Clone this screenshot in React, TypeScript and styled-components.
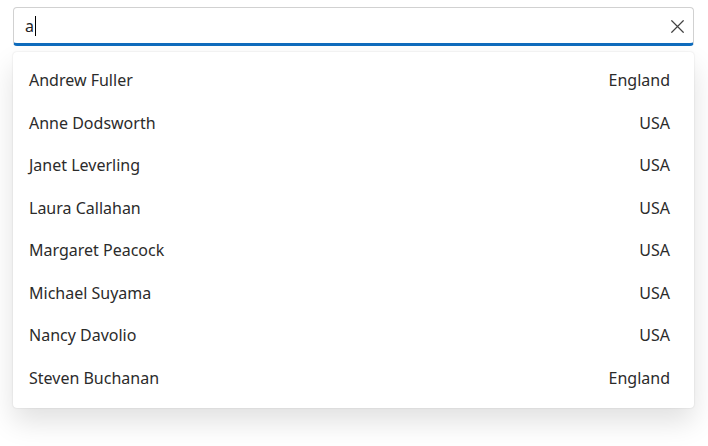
import React from "react";
import styled, { createGlobalStyle } from "styled-components";

const GlobalStyle = createGlobalStyle`
  html, body {
    margin: 0;
    padding: 0;
    background: #ffffff;
  }
  body {
    font-family: "Noto Sans", "Open Sans", sans-serif;
    color: #242424;
  }
`;

type Employee = {
  name: string;
  country: string;
};

const employees: Employee[] = [
  { name: "Andrew Fuller", country: "England" },
  { name: "Anne Dodsworth", country: "USA" },
  { name: "Janet Leverling", country: "USA" },
  { name: "Laura Callahan", country: "USA" },
  { name: "Margaret Peacock", country: "USA" },
  { name: "Michael Suyama", country: "USA" },
  { name: "Nancy Davolio", country: "USA" },
  { name: "Steven Buchanan", country: "England" },
];

const Wrapper = styled.div`
  display: flex;
  flex-direction: column;
  gap: 6px;
  min-height: 100vh;
  box-sizing: border-box;
  padding: 7px 14px 38px 13px;
`;

const InputBox = styled.div`
  display: flex;
  align-items: center;
  height: 35px;
  padding: 0 6px 0 11px;
  border: 1px solid #d1d1d1;
  border-bottom: 3px solid #0f6cbd;
  border-radius: 4px;
  background: #fff;
`;

const InputText = styled.span`
  flex: 1;
  font-size: 16px;
  line-height: 20px;
  color: #242424;
  display: flex;
  align-items: center;
`;

const Caret = styled.span`
  display: inline-block;
  width: 1px;
  height: 20px;
  background: #000;
  margin-left: 1px;
`;

const ClearButton = styled.button`
  display: flex;
  align-items: center;
  justify-content: center;
  width: 20px;
  height: 20px;
  margin-top: 2px;
  padding: 0;
  border: none;
  background: transparent;
  color: #424242;
`;

const Popup = styled.ul`
  list-style: none;
  margin: 0;
  padding: 7px 0 9px;
  background: #fff;
  border-radius: 4px;
  box-shadow: 0 14px 28px rgba(0, 0, 0, 0.12), 0 0 2px rgba(0, 0, 0, 0.14);
`;

const Row = styled.li`
  display: flex;
  justify-content: space-between;
  align-items: center;
  height: 42.5px;
  padding: 0 24px 0 16px;
  font-size: 16px;
  color: #2b2b2b;
`;

export default function App() {
  return (
    <>
      <GlobalStyle />
      <Wrapper>
        <InputBox>
          <InputText>
            a<Caret />
          </InputText>
          <ClearButton aria-label="Clear">
            <svg width="13" height="13" viewBox="0 0 13 13" fill="none">
              <path
                d="M0.75 0.75L12.25 12.25M12.25 0.75L0.75 12.25"
                stroke="currentColor"
                strokeWidth="1.2"
                strokeLinecap="round"
              />
            </svg>
          </ClearButton>
        </InputBox>
        <Popup>
          {employees.map((e) => (
            <Row key={e.name}>
              <span>{e.name}</span>
              <span>{e.country}</span>
            </Row>
          ))}
        </Popup>
      </Wrapper>
    </>
  );
}
